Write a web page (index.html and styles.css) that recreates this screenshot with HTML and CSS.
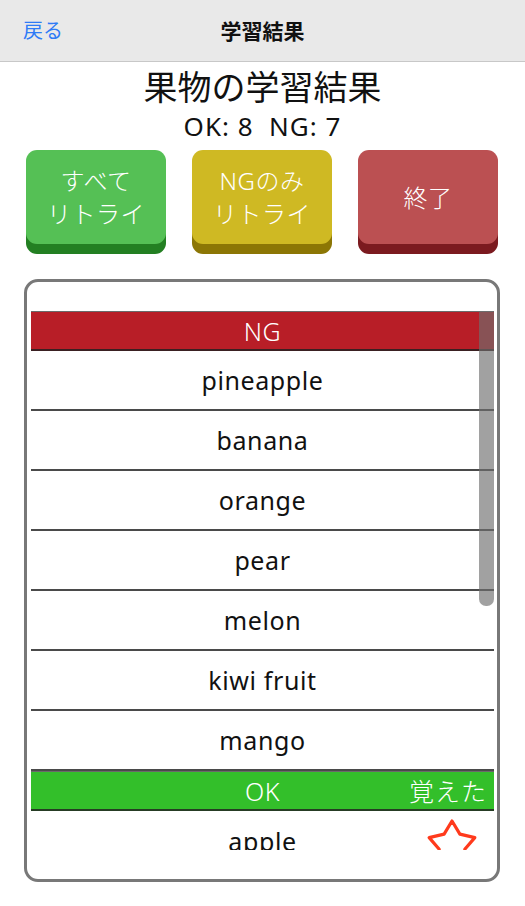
FILE: index.html
```html
<!DOCTYPE html>
<html lang="ja">
<head>
<meta charset="utf-8">
<title>学習結果</title>
<link rel="stylesheet" href="styles.css">
</head>
<body>
<header class="navbar">
  <a class="back">戻る</a>
  <h1 class="nav-title">学習結果</h1>
  <span></span>
</header>
<main>
  <h2 class="title">果物の学習結果</h2>
  <p class="score">OK: 8  NG: 7</p>
  <div class="actions">
    <button class="btn btn-green">すべて<br>リトライ</button>
    <button class="btn btn-yellow">NGのみ<br>リトライ</button>
    <button class="btn btn-red">終了</button>
  </div>
  <section class="result-box">
    <div class="scroll">
      <div class="section-header ng"><span></span><span>NG</span><span></span></div>
      <div class="row"><span></span><span>pineapple</span><span></span></div>
      <div class="row"><span></span><span>banana</span><span></span></div>
      <div class="row"><span></span><span>orange</span><span></span></div>
      <div class="row"><span></span><span>pear</span><span></span></div>
      <div class="row"><span></span><span>melon</span><span></span></div>
      <div class="row"><span></span><span>kiwi fruit</span><span></span></div>
      <div class="row"><span></span><span>mango</span><span></span></div>
      <div class="section-header ok"><span></span><span>OK</span><span class="hdr-right">覚えた</span></div>
      <div class="row"><span></span><span>apple</span>
        <svg class="star" width="52" height="52" viewBox="0 0 52 52" aria-hidden="true">
          <polygon points="26,2 33.9,15.1 48.8,18.6 38.8,30.2 40.1,45.4 26,39.5 11.9,45.4 13.2,30.2 3.2,18.6 18.1,15.1" fill="none" stroke="#ff3a1c" stroke-width="3.2" stroke-linejoin="round"/>
        </svg>
      </div>
      <div class="scrollbar"></div>
    </div>
  </section>
</main>
</body>
</html>
```
FILE: styles.css
```css
body {
  margin: 0;
  background: #fff;
  color: #111;
  font-family: "Noto Sans", "Noto Sans CJK JP", sans-serif;
}

.navbar {
  height: 61px;
  background: #e9e9e9;
  border-bottom: 1px solid #c8c8c8;
  display: grid;
  grid-template-columns: 1fr auto 1fr;
  align-items: center;
}

.back {
  padding-left: 23px;
  color: #2f7bf6;
  font-size: 20px;
  line-height: 24px;
}

.nav-title {
  margin: 0;
  font-size: 21px;
  font-weight: 700;
  line-height: 26px;
  color: #111;
}

.title {
  margin: 5px 0 0;
  text-align: center;
  font-size: 34px;
  font-weight: 400;
  line-height: 40px;
}

.score {
  margin: 4px 0 0;
  text-align: center;
  font-size: 26px;
  line-height: 30px;
  letter-spacing: 1px;
  white-space: pre;
}

.actions {
  display: flex;
  gap: 26px;
  padding-left: 26px;
  margin-top: 9px;
}

.btn {
  width: 140px;
  height: 94px;
  border: 0;
  border-radius: 11px;
  padding: 0;
  display: flex;
  align-items: center;
  justify-content: center;
  text-align: center;
  color: #fff;
  font-family: inherit;
  font-size: 24px;
  font-weight: 300;
  line-height: 33px;
  letter-spacing: 0.5px;
}

.btn-green {
  background: #55c055;
  box-shadow: 0 10px 0 #237f22;
}

.btn-yellow {
  background: #cfb923;
  box-shadow: 0 10px 0 #8c7605;
}

.btn-red {
  background: #bb5052;
  box-shadow: 0 10px 0 #7b1a1f;
}

.result-box {
  margin: 35px 0 0 24px;
  width: 476px;
  height: 603px;
  box-sizing: border-box;
  border: 3px solid #787878;
  border-radius: 14px;
  padding: 29px 3px 29px 4px;
}

.scroll {
  position: relative;
  height: 539px;
  overflow: hidden;
}

.section-header {
  height: 40px;
  box-sizing: border-box;
  border-top: 1px solid #6a6a6a;
  border-bottom: 2px solid #3a2022;
  display: grid;
  grid-template-columns: 1fr auto 1fr;
  align-items: center;
  color: #fff;
  font-size: 25px;
  font-weight: 300;
  line-height: 30px;
  letter-spacing: 0.5px;
}

.ng {
  background: #b81e27;
}

.ok {
  background: #33bf2a;
  border-bottom-color: #263c24;
}

.hdr-right {
  justify-self: end;
  padding-right: 7px;
  letter-spacing: 1px;
}

.row {
  height: 60px;
  box-sizing: border-box;
  border-bottom: 2px solid #4a4a4a;
  display: grid;
  grid-template-columns: 1fr auto 1fr;
  align-items: center;
  font-size: 25px;
  line-height: 30px;
  letter-spacing: 0.6px;
  color: #111;
}

.star {
  justify-self: end;
  margin-right: 16px;
  margin-top: 8px;
}

.scrollbar {
  position: absolute;
  top: 0;
  right: 0;
  width: 15px;
  height: 295px;
  border-radius: 2px 2px 7px 7px;
  background: rgba(110, 110, 110, 0.65);
}
```
